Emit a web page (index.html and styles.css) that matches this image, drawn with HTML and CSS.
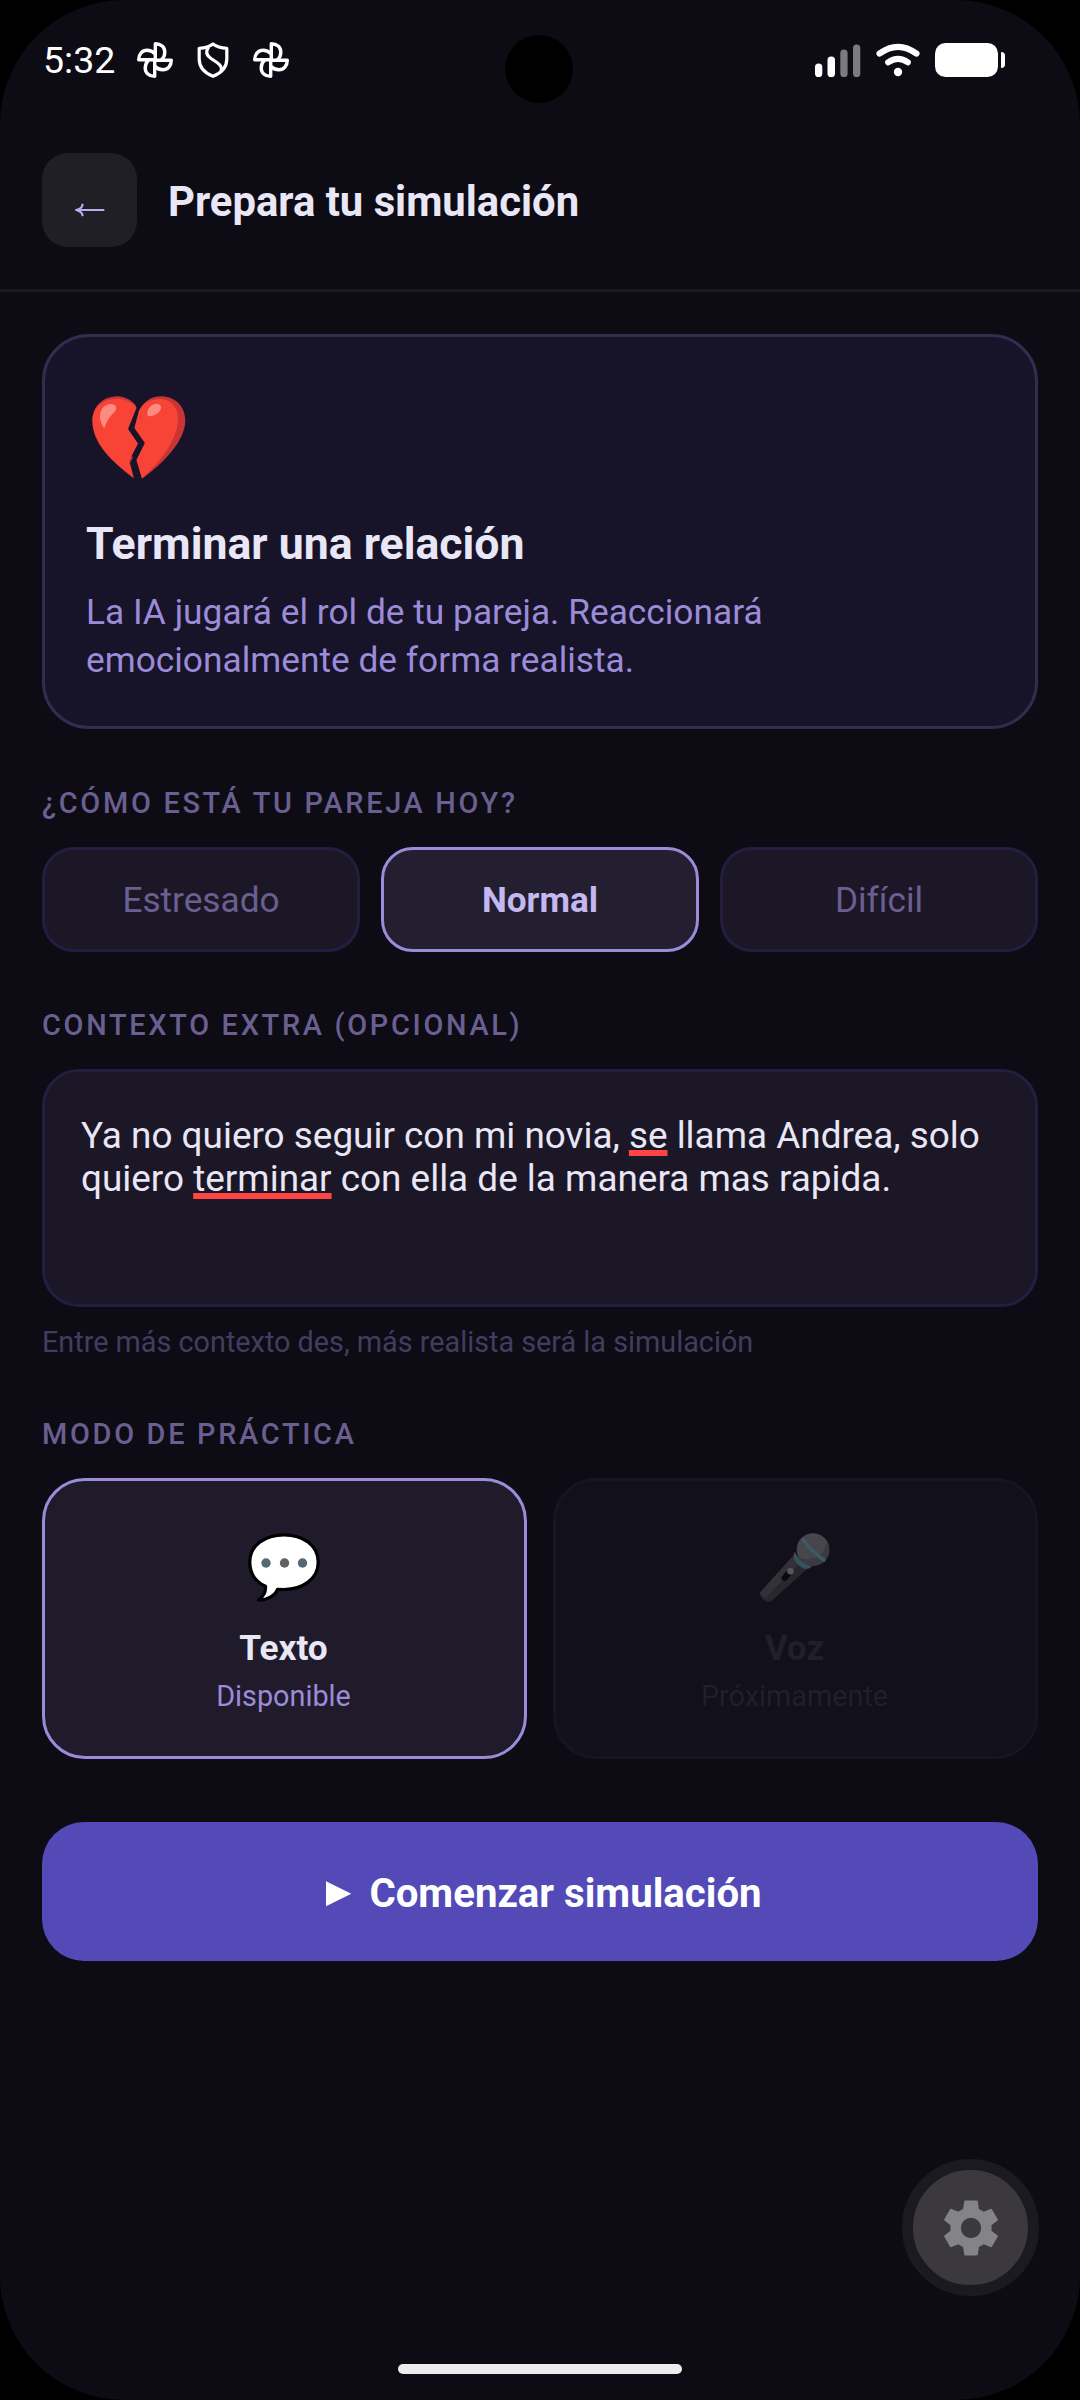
FILE: index.html
```html
<!DOCTYPE html>
<html lang="es">
<head>
<meta charset="utf-8">
<title>Prepara tu simulación</title>
<link rel="stylesheet" href="styles.css">
</head>
<body>
<svg class="defs" width="0" height="0" aria-hidden="true">
  <symbol id="fan" viewBox="0 0 36 36">
    <g fill="none" stroke="#fff" stroke-width="3.4" stroke-linejoin="round" stroke-linecap="round">
      <path d="M18.300 18V1.700C24 1.700 27.800 5.300 27.800 10C27.800 13.500 26.500 16 24.500 17.800"/>
      <path d="M18.300 18V1.700C24 1.700 27.800 5.300 27.800 10C27.800 13.500 26.500 16 24.500 17.800" transform="rotate(90 18 18)"/>
      <path d="M18.300 18V1.700C24 1.700 27.800 5.300 27.800 10C27.800 13.500 26.500 16 24.500 17.800" transform="rotate(180 18 18)"/>
      <path d="M18.300 18V1.700C24 1.700 27.800 5.300 27.800 10C27.800 13.500 26.500 16 24.500 17.800" transform="rotate(270 18 18)"/>
    </g>
  </symbol>
</svg>
<div class="screen">
  <div class="camera"></div>
  <div class="status">
    <span class="clock">5:32</span>
    <svg class="fan" width="36" height="36"><use href="#fan"/></svg>
    <svg class="shield" width="32" height="36" viewBox="0 0 32 36" fill="none" stroke="#fff" stroke-width="3.2" stroke-linejoin="round"><path d="M16 2C12.500 4.700 7.500 6 2.200 6.400V17C2.200 25.500 7.500 31 16 34.300C24.500 31 29.800 25.500 29.800 17V6.400C24.500 6 19.500 4.700 16 2Z"/><path d="M11.500 5C8.500 9.500 9.500 13.500 14 16.500L20 20.500C24.300 23.500 25.500 26 24 29.500"/></svg>
    <svg class="fan last" width="36" height="36"><use href="#fan"/></svg>
    <svg class="signal" width="46" height="33" viewBox="0 0 46 33"><g fill="#fff"><rect x="0" y="19.500" width="7.300" height="13.500" rx="3.600"/><rect x="12.500" y="12.500" width="7.500" height="20.500" rx="3.600"/></g><g fill="#7b7a80"><rect x="25.300" y="5.500" width="7.300" height="27.500" rx="3.600"/><rect x="38" y="0.500" width="7.300" height="32.500" rx="3.600"/></g></svg>
    <svg class="wifi" width="44" height="34" viewBox="0 0 44 34" fill="none" stroke="#fff" stroke-width="6.200" stroke-linecap="round"><path d="M3.600 10.600Q22 -2.800 40.400 10.600"/><path d="M12.200 19.200Q22 12.500 31.800 19.200"/><circle cx="22" cy="29" r="4.200" fill="#fff" stroke="none"/></svg>
    <svg class="battery" width="71" height="35" viewBox="0 0 71 35" fill="#fff"><rect x="0" y="0" width="63" height="34" rx="10.500"/><path d="M66 9C69 9 70 10.500 70 13V21C70 23.500 69 25 66 25Z"/></svg>
  </div>

  <header class="header">
    <button class="back" aria-label="Volver"><svg width="30" height="14" viewBox="0 0 30 14" fill="none" stroke="#b8aee9" stroke-width="2.100"><path d="M1.500 7H29.300"/><path d="M7.800 .9L7 3.400Q5.800 5.600 1.500 7Q5.800 8.400 7 10.600L7.800 13.100"/></svg></button>
    <h1 class="title">Prepara tu simulación</h1>
  </header>

  <main class="content">
    <section class="scenario">
      <svg class="heart" width="94" height="84" viewBox="0 0 94 84">
        <path fill="#c93535" d="M43.500 9C37 2 29.500 0 23 .4C9 1.200.3 12 .3 25C.3 47 19 65 42 82.500L38 67L41 61L36 59L45 49L34 36L43 14Z"/>
        <path fill="#f84437" d="M43.500 10C38 4.500 31 2.500 24 2.700C10 3 1 12 .6 24C.5 46 18 64 41 81L37 65L46 47.500L36 33L44.500 12Z"/>
        <path fill="#c93535" d="M47 15C52 4 61 0 70 .3C84 1 93.500 11 93.300 25C93 45 71 68 50 82.500L44.500 64L53 47L42.500 32Z"/>
        <path fill="#f84437" d="M47 15C52 6 60 2.500 69 3C81 4 87 13 86 25C84.500 45 69 65 50 82.500L44.500 64L53 47L42.500 32Z"/>
        <path fill="#ff8a80" d="M18 8C24 7.500 26 12 22.500 16C18 20.500 15 24 12.500 32C7 27 4.500 10 18 8ZM63 8C69 7 71 12 67 16C63 20 58 21 56 20C54 16 57 9 63 8Z"/>
      </svg>
      <h2 class="scenario-name">Terminar una relación</h2>
      <p class="scenario-text">La IA jugará el rol de tu pareja. Reaccionará<br>emocionalmente de forma realista.</p>
    </section>

    <h3 class="label">¿CÓMO ESTÁ TU PAREJA HOY?</h3>
    <div class="chips">
      <button class="chip">Estresado</button>
      <button class="chip selected">Normal</button>
      <button class="chip">Difícil</button>
    </div>

    <h3 class="label context-label">CONTEXTO EXTRA (OPCIONAL)</h3>
    <div class="field">Ya no quiero seguir con mi novia, <span class="typo">se</span> llama Andrea, solo<br>quiero <span class="typo">terminar</span> con ella de la manera mas rapida.</div>
    <p class="hint">Entre más contexto des, más realista será la simulación</p>

    <h3 class="label mode-label">MODO DE PRÁCTICA</h3>
    <div class="modes">
      <div class="mode active">
        <svg width="72" height="70" viewBox="0 0 72 70"><path fill="#fff" stroke="#000" stroke-width="3.200" stroke-linejoin="round" d="M36 1.800C54.500 1.800 70.200 12 70.200 29C70.200 46 54.500 56.500 36 56.500L29.500 56.300C27 62.500 19 67.500 10.500 67C15.500 63.500 18 58.500 17.500 53.300C8 49 1.800 41 1.800 29C1.800 12 17.500 1.800 36 1.800Z"/><g fill="#546a73"><circle cx="18" cy="30" r="4.700"/><circle cx="36.500" cy="30" r="4.700" fill="#5c6265"/><circle cx="54.500" cy="30" r="4.700"/></g></svg>
        <strong class="mode-name">Texto</strong>
        <span class="mode-state">Disponible</span>
      </div>
      <div class="mode disabled">
        <svg width="72" height="70" viewBox="0 0 72 70"><path fill="#29272d" d="M34 23L48 36L12.500 68C8 71 -1 64 1.500 59Z"/><path fill="#333137" d="M34 23L41 29L7 65C3 64 0 61 1.500 59Z"/><circle cx="54" cy="16.500" r="16.300" fill="#48464d"/><path fill="#3c3a41" d="M68 8C73 20 67 32 54 33C46 33 41 29 39 24C52 30 66 23 68 8Z"/><path fill="#36525b" d="M36 19C33 23 35 28 40 32.500C45 37 50 37 53 33.500C44 31 39 26 36 19Z"/><path fill="none" stroke="#3c5a64" stroke-width="3.600" stroke-linecap="round" d="M44 6.500C50 15 56 21 65 27"/><path fill="none" stroke="#0b0a0d" stroke-width="6" stroke-linecap="round" d="M25.500 45L29 41"/><circle cx="31.500" cy="38.300" r="3.300" fill="#59575d"/></svg>
        <strong class="mode-name">Voz</strong>
        <span class="mode-state">Próximamente</span>
      </div>
    </div>

    <button class="start"><svg width="26" height="26" viewBox="0 0 26 26" fill="#fff"><path d="M0 .3L25.300 12.800L0 25.300Z"/></svg><span>Comenzar simulación</span></button>
  </main>

  <button class="settings" aria-label="Ajustes"><svg width="66" height="66" viewBox="0 0 24 24" fill="#848388"><path d="M19.430 12.980c.04-.32.07-.64.07-.98s-.03-.66-.07-.98l2.110-1.650c.19-.15.24-.42.12-.64l-2-3.460c-.12-.22-.39-.3-.61-.22l-2.490 1c-.52-.4-1.080-.73-1.690-.98l-.38-2.650C14.460 2.180 14.250 2 14 2h-4c-.25 0-.46.18-.49.42l-.38 2.650c-.61.25-1.170.59-1.690.98l-2.490-1c-.23-.09-.49 0-.61.22l-2 3.460c-.13.22-.07.49.12.64l2.110 1.650c-.04.32-.07.65-.07.98s.03.66.07.98l-2.110 1.650c-.19.15-.24.42-.12.64l2 3.460c.12.22.39.3.61.22l2.490-1c.52.4 1.080.73 1.690.98l.38 2.650c.03.24.24.42.49.42h4c.25 0 .46-.18.49-.42l.38-2.650c.61-.25 1.170-.59 1.690-.98l2.490 1c.23.09.49 0 .61-.22l2-3.460c.12-.22.07-.49-.12-.64l-2.110-1.650zM12 15.700a3.700 3.700 0 1 1 0-7.400 3.700 3.700 0 0 1 0 7.400z"/></svg></button>
  <div class="home-bar"></div>
</div>
</body>
</html>
```
FILE: styles.css
```css
* { box-sizing: border-box; margin: 0; padding: 0; }

body {
  background: #000;
  font-family: Roboto, "Liberation Sans", sans-serif;
  color: #e9e6f5;
}

button { font: inherit; border: 0; color: inherit; }
svg { display: block; flex: none; }
.defs { position: absolute; }

.screen {
  position: relative;
  width: 1080px;
  height: 2400px;
  overflow: hidden;
  border-radius: 124px;
  background: #0d0b14;
}

.camera {
  position: absolute;
  left: 505px;
  top: 35px;
  width: 68px;
  height: 68px;
  border-radius: 50%;
  background: #000;
}

/* Status bar */
.status {
  display: flex;
  align-items: center;
  height: 120px;
  padding: 0 74px 0 43px;
}
.clock {
  width: 94px;
  font-size: 37.5px;
  line-height: 44px;
  color: #fff;
}
.shield { margin-left: 24px; }
.fan.last { margin-left: 24px; }
.signal { margin-left: auto; }
.wifi { margin-left: 15px; }
.battery { margin-left: 15px; }

/* Header */
.header {
  display: flex;
  align-items: center;
  gap: 31px;
  height: 172px;
  padding: 33px 42px 42px;
  border-bottom: 3px solid #1a1821;
}
.back {
  display: flex;
  align-items: center;
  justify-content: center;
  width: 95px;
  height: 94px;
  padding-top: 20px;
  border-radius: 26px;
  background: #201f25;
}
.title {
  padding-top: 3px;
  font-size: 41.8px;
  line-height: 50px;
  font-weight: 700;
}

.content { padding: 42px 42px 0; }

/* Scenario card */
.scenario {
  height: 395px;
  padding: 59px 41px 0;
  border: 3px solid #322d4f;
  border-radius: 47px;
  background: #171328;
}
.heart { margin-left: 6px; }
.scenario-name {
  margin-top: 36px;
  font-size: 44.6px;
  line-height: 56px;
  font-weight: 700;
}
.scenario-text {
  margin-top: 16px;
  font-size: 35.3px;
  line-height: 48px;
  color: #9b8bd9;
}

.label {
  margin-top: 55px;
  font-size: 28.9px;
  line-height: 38px;
  font-weight: 500;
  letter-spacing: 2.7px;
  color: #6b5f91;
}

/* Mood chips */
.chips {
  display: grid;
  grid-template-columns: repeat(3, 1fr);
  gap: 21px;
  margin-top: 25px;
}
.chip {
  height: 105px;
  border: 3px solid #231d40;
  border-radius: 32px;
  background: #1b1727;
  font-size: 35.2px;
  color: #6b5f91;
}
.chip.selected {
  border-color: #9b8bd9;
  background: #231f31;
  font-weight: 700;
  color: #c3b8f0;
}

/* Extra context */
.context-label { margin-top: 54px; }
.field {
  height: 238px;
  margin-top: 25px;
  padding: 42px 36px;
  border: 3px solid #231d40;
  border-radius: 37px;
  background: #1b1727;
  font-size: 36.9px;
  line-height: 43px;
  white-space: nowrap;
}
.typo {
  text-decoration: underline #ff4444 5.500px;
  text-decoration-skip-ink: none;
  text-underline-offset: 2px;
}
.hint {
  margin-top: 17px;
  font-size: 28.8px;
  line-height: 36px;
  color: #443c60;
}
.mode-label { margin-top: 55px; }

/* Practice modes */
.modes {
  display: grid;
  grid-template-columns: 1fr 1fr;
  gap: 26px;
  margin-top: 25px;
}
.mode {
  display: flex;
  flex-direction: column;
  align-items: center;
  height: 281px;
  padding-top: 52px;
  padding-right: 2px;
  border: 3px solid #171523;
  border-radius: 43px;
  background: #12101a;
  color: #211f2b;
}
.mode.active {
  border-color: #9b8bd9;
  background: #1f1b2b;
  color: #e9e6f5;
}
.mode-name {
  margin-top: 23px;
  font-size: 35.2px;
  line-height: 44px;
  font-weight: 700;
}
.mode-state {
  margin-top: 8px;
  font-size: 28.8px;
  line-height: 36px;
}
.active .mode-state { color: #9b8bd9; }

.start {
  display: flex;
  align-items: center;
  justify-content: center;
  gap: 17px;
  width: 100%;
  height: 139px;
  margin-top: 63px;
  padding: 3px 0 0 8px;
  border-radius: 42px;
  background: #534ab7;
  font-size: 40.2px;
  font-weight: 700;
  color: #fff;
}
.start svg { margin-top: 2px; }

/* Overlays */
.settings {
  position: absolute;
  left: 902px;
  top: 2159px;
  display: flex;
  align-items: center;
  justify-content: center;
  width: 137px;
  height: 137px;
  border: 11px solid #1b1a20;
  border-radius: 50%;
  background: #3b393e;
}
.home-bar {
  position: absolute;
  left: 398px;
  top: 2364px;
  width: 284px;
  height: 10px;
  border-radius: 5px;
  background: #ececec;
}
```
